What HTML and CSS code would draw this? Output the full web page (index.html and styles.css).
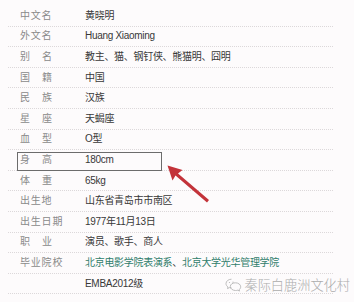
FILE: index.html
```html
<!DOCTYPE html>
<html lang="zh">
<head>
<meta charset="utf-8">
<link rel="stylesheet" href="styles.css">
</head>
<body>
<div class="page">
  <div class="info">
    <div class="row"><span class="label">中文名</span><span class="value">黄晓明</span></div>
    <div class="row"><span class="label">外文名</span><span class="value">Huang Xiaoming</span></div>
    <div class="row"><span class="label"><span class="j">别名</span></span><span class="value">教主、猫、钢钉侠、熊猫明、囧明</span></div>
    <div class="row"><span class="label"><span class="j">国籍</span></span><span class="value">中国</span></div>
    <div class="row"><span class="label"><span class="j">民族</span></span><span class="value">汉族</span></div>
    <div class="row"><span class="label"><span class="j">星座</span></span><span class="value">天蝎座</span></div>
    <div class="row"><span class="label"><span class="j">血型</span></span><span class="value">O型</span></div>
    <div class="row"><span class="label"><span class="j">身高</span></span><span class="value">180cm</span></div>
    <div class="row"><span class="label"><span class="j">体重</span></span><span class="value">65kg</span></div>
    <div class="row"><span class="label">出生地</span><span class="value">山东省青岛市市南区</span></div>
    <div class="row"><span class="label">出生日期</span><span class="value">1977年11月13日</span></div>
    <div class="row"><span class="label"><span class="j">职业</span></span><span class="value">演员、歌手、商人</span></div>
    <div class="row"><span class="label">毕业院校</span><span class="value"><span class="link">北京电影学院表演系</span>、<span class="link">北京大学光华管理学院</span></span></div>
    <div class="row"><span class="label"></span><span class="value">EMBA2012级</span></div>
  </div>

  <div class="highlight"></div>
  <svg class="arrow" width="60" height="50" viewBox="160 160 60 50">
    <polygon points="167.5,165.5 182.5,170 178,173.5 209,200 207,202.5 175.5,175.5 172.5,180.5" fill="#c3333a"/>
  </svg>

  <div class="watermark">
    <svg class="wx" width="17" height="14" viewBox="0 0 17 14">
      <path d="M6.5 1.2C3.4 1.2 1 3.2 1 5.6c0 1.4.8 2.6 2 3.4l-.5 1.6 1.9-1c.6.2 1.3.3 2.1.3" fill="none" stroke="#b5b5b5" stroke-width="0.9"/>
      <path d="M10.5 4.8c2.9 0 5.2 1.8 5.2 4 0 1.2-.6 2.2-1.6 2.9l.4 1.4-1.7-.9c-.7.2-1.4.3-2.3.3-2.9 0-5.2-1.8-5.2-4s2.3-3.7 5.2-3.7z" fill="none" stroke="#b5b5b5" stroke-width="0.9"/>
      <circle cx="4.5" cy="4.5" r="0.6" fill="#b5b5b5"/>
      <circle cx="8" cy="4.2" r="0.6" fill="#b5b5b5"/>
    </svg>
    <span>秦际白鹿洲文化村</span>
  </div>
</div>
</body>
</html>
```

FILE: styles.css
```css
html, body {
  margin: 0;
  padding: 0;
}
body {
  background: #fdfbfc;
  font-family: "Liberation Sans", "Noto Sans CJK SC", sans-serif;
}
.page {
  position: relative;
  width: 354px;
  height: 302px;
  overflow: hidden;
}
.info {
  padding-top: 6px;
  margin-left: 8px;
  width: 325px;
}
.row {
  display: flex;
  align-items: center;
  height: 20.6px;
  box-sizing: border-box;
  border-bottom: 1px dotted #dcd8da;
  font-size: 10px;
  line-height: 1;
  white-space: nowrap;
}
.label {
  width: 77px;
  flex: none;
  box-sizing: border-box;
  padding-left: 12px;
  color: #8a8a8a;
  letter-spacing: 0.8px;
}
.label .j {
  display: inline-block;
  width: 32px;
  text-align: justify;
  text-align-last: justify;
  letter-spacing: 0;
}
.value {
  color: #383838;
  letter-spacing: -0.3px;
}
.link {
  color: #2f7d6b;
}
.highlight {
  position: absolute;
  left: 17px;
  top: 152px;
  width: 145px;
  height: 19px;
  box-sizing: border-box;
  border: 1px solid #6c6c6c;
}
.arrow {
  position: absolute;
  left: 160px;
  top: 160px;
}
.watermark {
  position: absolute;
  right: 4px;
  top: 276px;
  display: flex;
  align-items: center;
  gap: 3px;
  color: #acacac;
  font-size: 13.2px;
  font-family: "Noto Sans CJK SC", sans-serif;
  font-weight: 300;
  line-height: 18px;
  white-space: nowrap;
}
.wx {
  flex: none;
}
```
